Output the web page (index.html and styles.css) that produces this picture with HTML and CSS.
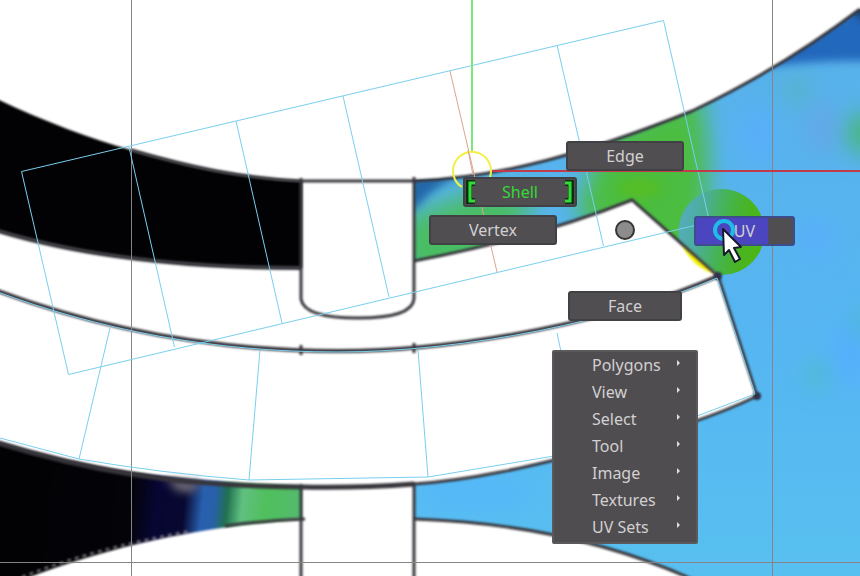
FILE: index.html
```html
<!DOCTYPE html>
<html lang="en">
<head>
<meta charset="utf-8">
<meta name="viewport" content="width=device-width, initial-scale=1">
<title>UV Editor</title>
<link rel="stylesheet" href="styles.css">
</head>
<body>
<main class="editor">
  <svg class="canvas" viewBox="0 0 860 576" preserveAspectRatio="xMinYMin slice" aria-hidden="true">
    <defs>
      <filter id="blur4" x="-50%" y="-50%" width="200%" height="200%"><feGaussianBlur stdDeviation="4"/></filter>
      <filter id="blur12" x="-80%" y="-80%" width="260%" height="260%"><feGaussianBlur stdDeviation="12"/></filter>
      <filter id="soft" x="-5%" y="-5%" width="110%" height="110%" color-interpolation-filters="sRGB"><feGaussianBlur stdDeviation="0.9"/></filter>
      <linearGradient id="sky" x1="0" y1="0" x2="0" y2="1">
        <stop offset="0" stop-color="#58b0e8"/><stop offset="0.6" stop-color="#56b6f2"/><stop offset="1" stop-color="#58c0f0"/>
      </linearGradient>
      <linearGradient id="lowerLeft" x1="0" y1="500" x2="300" y2="530" gradientUnits="userSpaceOnUse">
        <stop offset="0" stop-color="#020204"/><stop offset="0.43" stop-color="#040308"/><stop offset="0.52" stop-color="#070634"/>
        <stop offset="0.61" stop-color="#080830"/><stop offset="0.67" stop-color="#2860b0"/><stop offset="0.71" stop-color="#2860a8"/>
        <stop offset="0.75" stop-color="#207050"/><stop offset="0.8" stop-color="#60c080"/><stop offset="0.88" stop-color="#4fc05c"/>
        <stop offset="1" stop-color="#54ba70"/>
      </linearGradient>
      <linearGradient id="disc" x1="678" y1="220" x2="768" y2="236" gradientUnits="userSpaceOnUse">
        <stop offset="0" stop-color="#55acc0"/><stop offset="0.25" stop-color="#4cae9a"/><stop offset="0.5" stop-color="#45b450"/><stop offset="0.75" stop-color="#49b420"/><stop offset="1" stop-color="#4eb612"/>
      </linearGradient>
      <clipPath id="rightClip">
        <path d="M414 180 C500 178 590 152 692 111 Q782 68 860 9 V580 H694 Q570 524 414 519 V484 C480 480 550 461 600 449 Q700 424 757 396 L718 276 L632 200 Q540 237 414 261Z"/>
      </clipPath>
    </defs>

    <g filter="url(#soft)">
      <path fill="#020204" d="M-5 98 C45 122 90 138 131 150 C190 167 240 178 302 181 V268 C200 268 90 259 -5 230Z"/>
      <path fill="url(#lowerLeft)" d="M-5 441 C80 466 150 480 302 486 V519 C200 527 110 546 22 580 H-5Z"/>
      <path fill="none" stroke="#88828a" stroke-width="2" stroke-dasharray="4 4" d="M22 577 C75 556 130 542 190 531"/>
      <path fill="#77717c" filter="url(#blur4)" d="M165 479 L202 482 L192 492 L178 491Z"/>
    </g>

    <g clip-path="url(#rightClip)">
      <rect x="410" width="455" height="580" fill="url(#sky)"/>
      <g filter="url(#blur12)">
        <path fill="#4bbd40" d="M605 135 L700 90 L708 155 L706 265 L650 250 L575 215Z"/>
        <path fill="#48bd62" d="M400 220 L475 190 L540 196 L490 270 L400 280Z"/>
        <ellipse cx="757" cy="135" rx="15" ry="30" fill="#58aefc"/>
        <ellipse cx="822" cy="128" rx="13" ry="26" fill="#66a5e7"/>
        <ellipse cx="860" cy="133" rx="13" ry="19" fill="#45b755"/>
        <ellipse cx="797" cy="90" rx="10" ry="12" fill="#52b5b0"/>
        <ellipse cx="816" cy="238" rx="14" ry="20" fill="#59adff"/>
        <ellipse cx="850" cy="353" rx="14" ry="35" fill="#55adff"/>
        <ellipse cx="818" cy="374" rx="7" ry="12" fill="#43bea0"/>
        <ellipse cx="863" cy="325" rx="6" ry="14" fill="#43bea0"/>
        <ellipse cx="475" cy="494" rx="60" ry="14" fill="#55b7fb"/>
      </g>
      <g filter="url(#blur4)">
        <path fill="#2467bc" d="M770 62 L870 0 V61 Q825 60 770 66Z"/>
        <path fill="#14344e" d="M849 12 L868 -4 V21Z"/>
        <path fill="#2368a8" d="M410 176 H467 Q436 182 417 208 H410Z"/>
        <ellipse cx="640" cy="188" rx="22" ry="10" fill="#54bd25"/>
      </g>
    </g>
    <path fill="url(#disc)" d="M680 243 A43 43 0 1 1 720 275Z"/>
    <path fill="#f5f000" filter="url(#soft)" d="M681 243 Q690 264 709 272 L716 274Z"/>

    <g class="outline" filter="url(#soft)">
      <path d="M131 150 C190 167 240 178 302 181 H414 C500 178 590 152 692 111 Q782 68 860 9"/>
      <path stroke-width="4" d="M-5 230 C90 259 200 268 302 268"/>
      <path d="M414 261 Q540 237 632 200 L718 276 L757 396 Q700 424 600 449 C550 461 480 480 414 484"/>
      <path stroke-width="5" d="M-5 442 C80 468 165 486 302 487 Q360 488 414 484"/>
      <path stroke-width="4" d="M-5 290 C100 329 212 351 338 351 C465 351 620 319 718 276"/>
      <path d="M301 178 V299 Q304 318 358 318 Q412 318 414 299 V177 M301 484 V580 M414 482 V580 M301 345 V355 M414 343 V353"/>
      <path d="M414 519 Q570 524 694 580 M225 526 Q260 521 305 519"/>
    </g>
    <g fill="#30324a" filter="url(#soft)"><circle cx="718" cy="276" r="4"/><circle cx="757" cy="396" r="4"/></g>
    <path class="rule" d="M131.500 0 V576 M772.500 0 V576 M0 562.500 H860"/>

    <g class="wire">
      <path d="M21.500 171.500 L663.500 20.500 L709.500 222 L68.500 374.500Z M129 147 L174.500 347 M236 121 L282 323 M343 96 L389 297 M557 45 L603.500 246"/>
      <path d="M-5 291 C100 330 212 352 338 352 C465 352 620 320 717 278 L755 394 L697 416 M110 328 L79 459 M260 350 L249 480 M418 350 L428 477 M557 333 L563 361 M0 438 L79 459 Q160 473 249 480 L428 477 L554 456"/>
      <path class="selected" d="M450 71 L497 272"/>
    </g>

    <path stroke="#7be87b" stroke-width="2" d="M472 0 V152"/>
    <path stroke="#c03c4c" stroke-width="2" d="M492 171 H860"/>
    <path d="M462 187 A19 19 0 1 1 490 177" fill="none" stroke="#f3ef45" stroke-width="2"/>
    <path class="wire selected" d="M468 150 L473 175"/>
    <circle cx="625" cy="230" r="9" fill="#8d8b8b" stroke="#353535" stroke-width="2"/>
  </svg>

  <nav aria-label="Component marking menu">
    <button class="mark edge" type="button">Edge</button>
    <button class="mark shell" type="button">
      <svg class="bracket" viewBox="0 0 12 24" aria-hidden="true"><path class="back" d="M10 3 H4 V21 H10"/><path d="M10 3 H5 V21 H10"/></svg>
      Shell
      <svg class="bracket" viewBox="0 0 12 24" aria-hidden="true"><path class="back" d="M2 3 H8 V21 H2"/><path d="M2 3 H7 V21 H2"/></svg>
    </button>
    <button class="mark vertex" type="button">Vertex</button>
    <button class="mark uv" type="button">UV</button>
    <button class="mark face" type="button">Face</button>
  </nav>

  <nav class="menu" aria-label="Editor menu">
    <button type="button">Polygons<i></i></button>
    <button type="button">View<i></i></button>
    <button type="button">Select<i></i></button>
    <button type="button">Tool<i></i></button>
    <button type="button">Image<i></i></button>
    <button type="button">Textures<i></i></button>
    <button type="button">UV Sets<i></i></button>
  </nav>

  <svg class="pointer" viewBox="0 0 34 48" aria-hidden="true">
    <circle cx="14" cy="14" r="9" fill="none" stroke="#20bce8" stroke-width="4"/>
    <path d="M13 13 L14 39 L19 34 L25 46 L30 43 L24 32 L31 31Z" fill="#fff" stroke="#151a2c" stroke-width="2" stroke-linejoin="round"/>
  </svg>
</main>
</body>
</html>
```
FILE: styles.css
```css
* { box-sizing: border-box; }

body {
  margin: 0;
  background: #fff;
  font: 16px/24px "Noto Sans", "Open Sans", sans-serif;
}

.editor {
  position: relative;
  min-height: 100vh;
  overflow: hidden;
}

.canvas {
  position: absolute;
  inset: 0;
  width: 100%;
  height: 100%;
}

.outline { fill: none; stroke: #38363c; stroke-width: 3; }
.rule { fill: none; stroke: #858585; stroke-width: 1; }
.wire { fill: none; stroke: #79cfee; stroke-width: 1; }
.selected { stroke: #d9a68c; }

button {
  margin: 0;
  padding: 0;
  color: #d2d0d2;
  font: inherit;
  cursor: pointer;
}

/* Marking-menu entries float around the centre of the gesture. */
.mark {
  position: absolute;
  display: flex;
  align-items: center;
  justify-content: center;
  height: 30px;
  border: 2px solid #414044;
  border-radius: 3px;
  background: #504e50;
}

.edge { left: 566px; top: 141px; width: 118px; }
.vertex { left: 429px; top: 215px; width: 128px; }
.face { left: 568px; top: 291px; width: 114px; }

.shell {
  left: 463px;
  top: 177px;
  width: 114px;
  justify-content: space-between;
  color: #36d936;
}

.bracket { width: 12px; height: 24px; }
.bracket path { fill: none; stroke: #30dc38; stroke-width: 3; }
.bracket .back { stroke: #0c300f; stroke-width: 6; }

.uv {
  left: 694px;
  top: 216px;
  width: 101px;
  border-color: #3c4c8c;
  background: linear-gradient(90deg, #4b46c0 74%, #504e50 75%);
}

.menu {
  position: absolute;
  left: 552px;
  top: 350px;
  width: 146px;
  padding-bottom: 1px;
  border: 2px solid #5b595b;
  border-radius: 2px;
  background: #4f4d4f;
}

.menu button {
  display: flex;
  align-items: center;
  justify-content: space-between;
  width: 100%;
  height: 27px;
  padding: 0 16px 2px 38px;
  border: 0;
  background: none;
}

.menu i {
  margin-bottom: 4px;
  border: 3px solid transparent;
  border-right: 0;
  border-left-color: #e0dee0;
}

.pointer {
  position: absolute;
  left: 710px;
  top: 216px;
  width: 34px;
  height: 48px;
  pointer-events: none;
}
```
